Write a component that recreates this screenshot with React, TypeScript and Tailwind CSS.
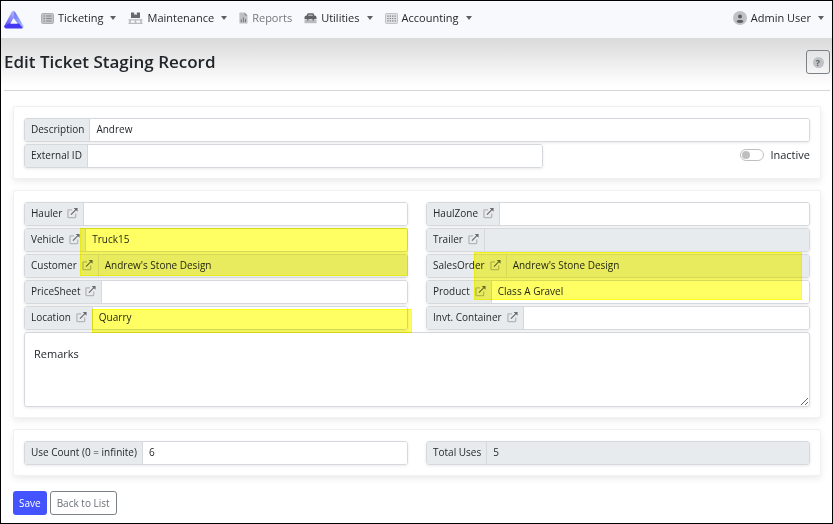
import React from "react";

type IconProps = { className?: string };

function LogoIcon() {
  return (
    <svg viewBox="0 0 20 18" className="h-[18px] w-5" aria-hidden="true">
      <defs>
        <linearGradient id="logoLeft" x1="0.6" y1="0" x2="0.2" y2="1">
          <stop offset="0" stopColor="#a9a8fa" />
          <stop offset="1" stopColor="#5548f2" />
        </linearGradient>
        <linearGradient id="logoRight" x1="0" y1="0" x2="1" y2="1">
          <stop offset="0" stopColor="#5f68f7" />
          <stop offset="1" stopColor="#b4c4fb" />
        </linearGradient>
      </defs>
      <path d="M7.600 1.200 Q9.500 -0.600 11.400 1.200 L19.600 15 Q19.900 16.800 18.200 17.200 L14.500 13.400 L9.200 7 Z" fill="url(#logoRight)" />
      <path d="M7.600 1.200 Q9 -0.200 10.200 0.800 L10.200 6 L6 13 L1.600 17 Q-0.200 16.400 0.500 14.400 Z" fill="url(#logoLeft)" />
      <path d="M0.400 15 L4.800 12.400 L15 12.400 L18.800 16.900 Q18.200 17.400 17.600 17.400 L1.800 17.400 Q0.200 17 0.400 15 Z" fill="#4438f4" />
      <path d="M9.900 7.200 L13 12.500 L6.800 12.500 Z" fill="#f8f9fc" />
    </svg>
  );
}

function TicketIcon() {
  return (
    <svg viewBox="0 0 13 11" className="h-[11px] w-[13px]" aria-hidden="true">
      <rect x="0.5" y="0.5" width="12" height="10" rx="1.2" fill="#c3c5c8" stroke="#adafb2" />
      <path d="M2.4 3h1.6M2.4 5.5h1.6M2.4 8h1.6M5.2 3h5.4M5.2 5.5h5.4M5.2 8h5.4" stroke="#85888c" strokeWidth="1.1" />
    </svg>
  );
}

function PalletIcon() {
  return (
    <svg viewBox="0 0 15 13" className="h-[13px] w-[15px]" aria-hidden="true">
      <path d="M3 0.5h3.2v2.6l1.3-.8 1.3.8V0.5H12v5.6H3z" fill="#66696d" />
      <path d="M0.5 7.8h14M0.5 11.4h14" stroke="#b8babd" strokeWidth="1.2" />
      <path d="M2 8v3M7.5 8v3M13 8v3" stroke="#b8babd" strokeWidth="1.6" />
    </svg>
  );
}

function ReportIcon() {
  return (
    <svg viewBox="0 0 9 12" className="h-3 w-[9px]" aria-hidden="true">
      <path d="M1 .5h4.600L8.500 3.400V11a.6.6 0 0 1-.6.6H1A.6.6 0 0 1 .4 11V1.100A.6.6 0 0 1 1 .5z" fill="#bdbfc1" />
      <path d="M5.600 .5 8.500 3.400H5.600z" fill="#8c8e91" />
      <path d="M2.300 7.500v2.700M4.400 5.500v4.700M6.500 7v3.200" stroke="#77797c" strokeWidth="1" />
    </svg>
  );
}

function ToolboxIcon() {
  return (
    <svg viewBox="0 0 13 11" className="h-[11px] w-[13px]" aria-hidden="true">
      <path d="M3.600 3V1.600Q3.600 1 4.300 1h4.400q.7 0 .7.600V3" fill="none" stroke="#5f6266" strokeWidth="1.300" />
      <path d="M0.500 6V4.400Q.6 2.600 2.400 2.600h8.200q1.800 0 1.900 1.800V6z" fill="#5f6266" />
      <path d="M0.500 6.400h12v3.800H.5z" fill="#b9bbbe" />
      <path d="M3.800 5.200v2.400M9.200 5.200v2.400" stroke="#5f6266" strokeWidth="1.300" />
    </svg>
  );
}

function KeypadIcon() {
  return (
    <svg viewBox="0 0 13 11" className="h-[11px] w-[13px]" aria-hidden="true">
      <rect x="0.500" y="0.500" width="12" height="10" rx="0.800" fill="#dfe1e3" stroke="#c0c2c5" />
      <path d="M2.300 3.200h8.600M2.300 5.500h8.600M2.300 7.800h8.600" stroke="#7c7f83" strokeWidth="1.200" strokeDasharray="1.300 1.100" />
    </svg>
  );
}

function UserIcon() {
  return (
    <svg viewBox="0 0 14 14" className="h-[14px] w-[14px]" aria-hidden="true">
      <circle cx="7" cy="7" r="7" fill="#c0c1c3" />
      <circle cx="7" cy="5.400" r="2" fill="#5c5e61" />
      <path d="M3.600 10.800Q3.800 9 5.200 9h3.600q1.400 0 1.600 1.800Q9 12 7 12t-3.400-1.200z" fill="#5c5e61" />
    </svg>
  );
}

function OpenIcon({ className }: IconProps) {
  return (
    <svg viewBox="0 0 12 12" className={className} fill="none" aria-hidden="true">
      <path d="M5.500 2.500H2Q1 2.500 1 3.500V10q0 1 1 1h6.500q1 0 1-1V6.500" stroke="#b3b6b9" strokeWidth="1.400" />
      <path d="M4.300 7.700 10 2" stroke="#66696d" strokeWidth="1.300" />
      <path d="M7.300 .5h4.200V4.700z" fill="#66696d" />
    </svg>
  );
}

function Caret() {
  return <span className="border-x-[3px] border-t-[4px] border-x-transparent border-t-[#5c6066]" />;
}

type MenuProps = { label: string; icon: React.ReactNode };

function Menu({ label, icon }: MenuProps) {
  return (
    <button type="button" className="flex items-center gap-[7px] whitespace-nowrap">
      <span className="flex items-center gap-1">
        {icon}
        {label}
      </span>
      <Caret />
    </button>
  );
}

type FieldProps = {
  id: string;
  label: string;
  value?: string;
  link?: boolean;
  locked?: boolean;
};

function Field({ id, label, value = "", link = false, locked = false }: FieldProps) {
  return (
    <div className="flex h-6 w-full overflow-hidden rounded-[3px] border border-[#d5d9de] shadow-[0_1px_3px_rgba(0,0,0,0.09)]">
      <div className="flex shrink-0 items-center gap-[5px] border-r border-[#d5d9de] bg-[#e8ebee] pr-[5px] pb-[2px] pl-[6px] whitespace-nowrap">
        <label htmlFor={id}>{label}</label>
        {link && (
          <a href={"#" + id} aria-label={"Open " + label}>
            <OpenIcon className="h-3 w-[11px]" />
          </a>
        )}
      </div>
      <input
        id={id}
        defaultValue={value}
        readOnly={locked}
        className={
          locked
            ? "min-w-0 flex-1 bg-[#e8ebee] px-[6px] pb-[2px] outline-none"
            : "min-w-0 flex-1 bg-white px-[6px] pb-[2px] outline-none"
        }
      />
    </div>
  );
}

function Card({ children }: { children: React.ReactNode }) {
  return (
    <section className="rounded-[2px] border border-[#f1f1f2] bg-white px-[10px] pt-[11px] pb-[10px] shadow-[0_3px_7px_rgba(0,0,0,0.08)]">
      {children}
    </section>
  );
}

const highlight =
  "pointer-events-none absolute border border-[#ffff1a] bg-[#ffff63] mix-blend-multiply";

export default function App() {
  return (
    <div className="flex min-h-screen flex-col border border-black bg-white font-['Open_Sans','Segoe_UI',sans-serif] text-[10px] leading-4 text-[#24282d]">
      <nav className="flex h-[37px] items-center bg-[#f8f9fc] pr-2 pb-[3px] pl-[3px] text-[11px]">
        <a href="#home" aria-label="Home" className="mr-[17px] pt-[3px]">
          <LogoIcon />
        </a>
        <div className="flex items-center gap-3">
          <Menu label="Ticketing" icon={<TicketIcon />} />
          <Menu label="Maintenance" icon={<PalletIcon />} />
          <a href="#reports" className="flex items-center gap-1 text-[#74777b]">
            <ReportIcon />
            Reports
          </a>
          <Menu label="Utilities" icon={<ToolboxIcon />} />
          <Menu label="Accounting" icon={<KeypadIcon />} />
        </div>
        <div className="ml-auto">
          <Menu label="Admin User" icon={<UserIcon />} />
        </div>
      </nav>

      <header className="bg-linear-to-b from-[#dadada] to-white to-90% pr-[2px] pl-[3px]">
        <div className="flex h-[53px] items-center justify-between border-b border-[#d6d6d6] pb-1">
          <h1 className="text-[17px] leading-6 font-semibold text-[#212529]">Edit Ticket Staging Record</h1>
          <button
            type="button"
            aria-label="Help"
            className="flex h-6 w-6 items-center justify-center rounded-[3px] border border-[#7b8187]"
          >
            <span className="flex size-[11px] items-center justify-center rounded-full bg-[#bfc1c4] text-[9px] leading-none font-bold text-[#5d6166]">
              ?
            </span>
          </button>
        </div>
      </header>

      <main className="flex flex-col gap-[11px] pt-[15px] pr-[11px] pl-3">
        <Card>
          <div className="flex flex-col gap-[2px]">
            <Field id="description" label="Description" value="Andrew" />
            <div className="flex items-center justify-between">
              <div className="w-[66%]">
                <Field id="external" label="External ID" />
              </div>
              <label className="flex items-center gap-[6px] pb-[2px] text-[11px]">
                <input
                  type="checkbox"
                  role="switch"
                  className="h-3 w-6 appearance-none rounded-full border border-[#bfbfbf] bg-white before:m-px before:block before:size-2 before:rounded-full before:bg-[#bfbfbf]"
                />
                Inactive
              </label>
            </div>
          </div>
        </Card>

        <Card>
          <div className="relative">
            <div className="grid grid-cols-2 gap-x-[18px] gap-y-[2px]">
              <Field id="hauler" label="Hauler" link />
              <Field id="haulzone" label="HaulZone" link />
              <Field id="vehicle" label="Vehicle" value="Truck15" link />
              <Field id="trailer" label="Trailer" link locked />
              <Field id="customer" label="Customer" value="Andrew's Stone Design" link locked />
              <Field id="salesorder" label="SalesOrder" value="Andrew's Stone Design" link locked />
              <Field id="pricesheet" label="PriceSheet" link />
              <Field id="product" label="Product" value="Class A Gravel" link />
              <Field id="location" label="Location" value="Quarry" link />
              <Field id="container" label="Invt. Container" link />
            </div>
            <textarea
              aria-label="Remarks"
              defaultValue="Remarks"
              className="mt-[2px] block h-[75px] w-full resize-y rounded-[3px] border border-[#d5d9de] bg-white px-[9px] py-[13px] text-[11px] shadow-[0_1px_3px_rgba(0,0,0,0.09)] outline-none"
            />
            <div className={highlight + " top-[26px] left-[56px] h-12 w-[328px]"} />
            <div className={highlight + " top-[107px] left-[68px] h-6 w-[320px]"} />
            <div className={highlight + " top-[50px] right-[8px] h-12 w-[328px]"} />
          </div>
        </Card>

        <Card>
          <div className="grid grid-cols-2 gap-x-[18px]">
            <Field id="usecount" label="Use Count (0 = infinite)" value="6" />
            <Field id="totaluses" label="Total Uses" value="5" locked />
          </div>
        </Card>

        <div className="flex gap-[3px] pt-1">
          <button type="button" className="h-6 rounded-[3px] bg-[#4353ff] px-[6px] text-white">
            Save
          </button>
          <button type="button" className="h-6 rounded-[3px] border border-[#7b8187] bg-white px-[6px] text-[#6a6f75]">
            Back to List
          </button>
        </div>
      </main>
    </div>
  );
}
